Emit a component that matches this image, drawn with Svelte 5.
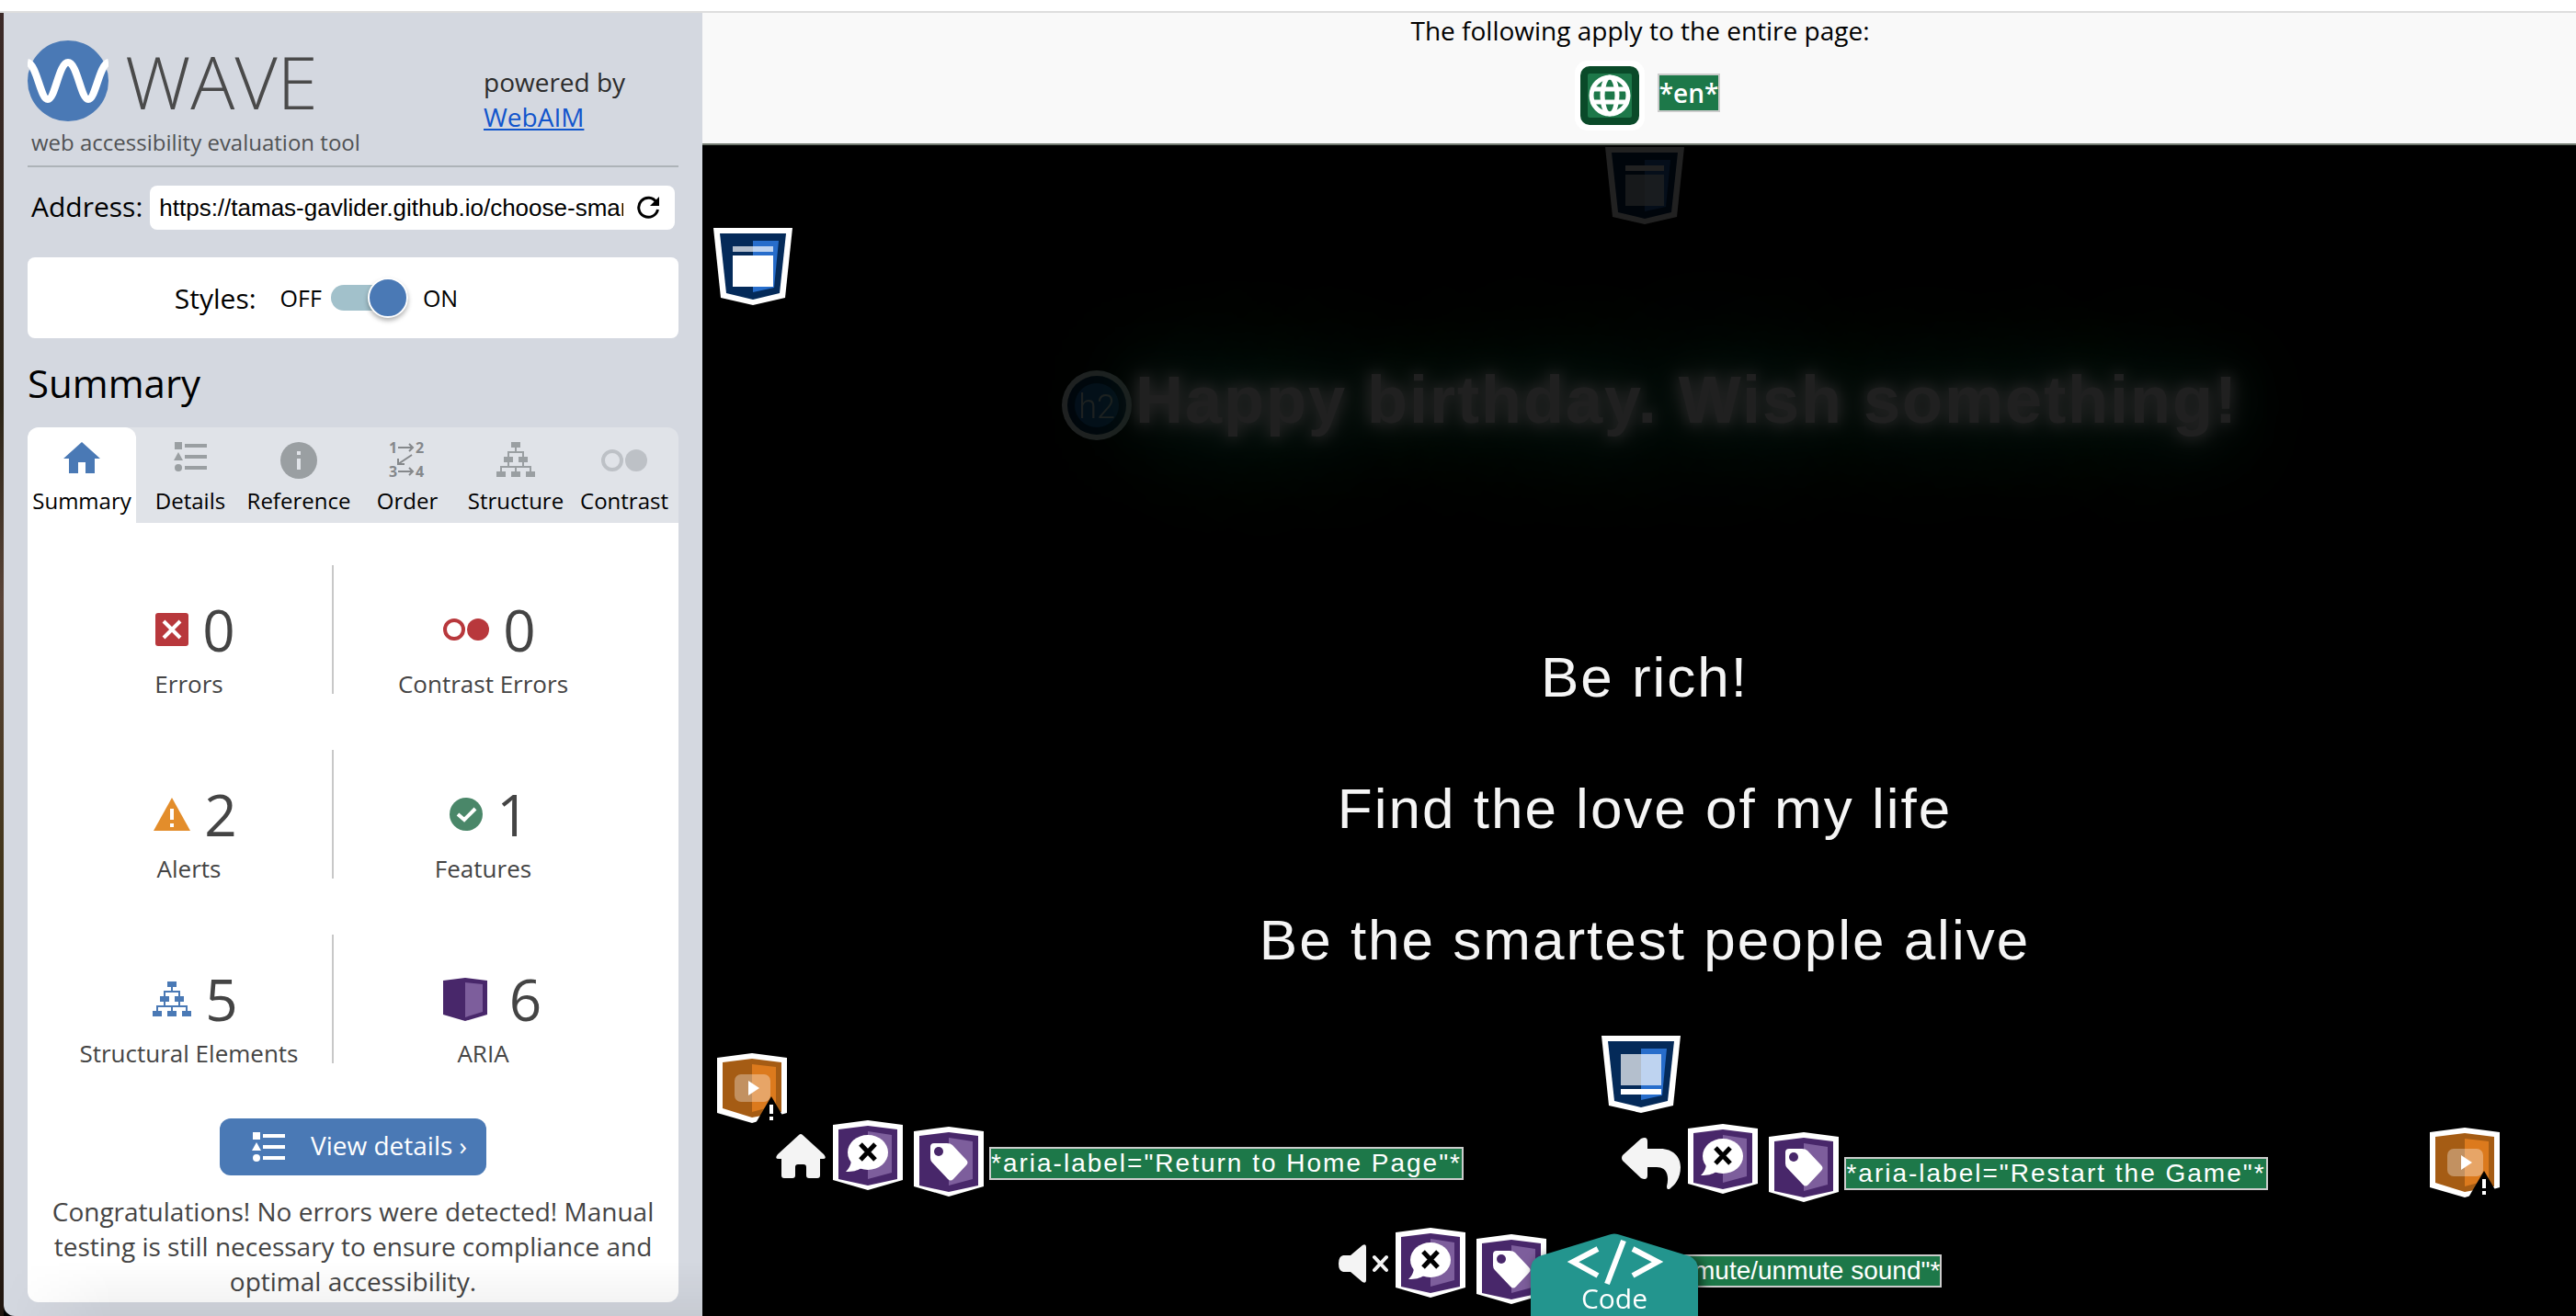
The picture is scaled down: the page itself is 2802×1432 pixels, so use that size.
<script>
  const tabs = [
    { id: 'home', label: 'Summary' },
    { id: 'details', label: 'Details' },
    { id: 'reference', label: 'Reference' },
    { id: 'order', label: 'Order' },
    { id: 'structure', label: 'Structure' },
    { id: 'contrast', label: 'Contrast' }
  ];

  const rows = [
    [
      { icon: 'error', count: 0, label: 'Errors' },
      { icon: 'contrastError', count: 0, label: 'Contrast Errors' }
    ],
    [
      { icon: 'alert', count: 2, label: 'Alerts' },
      { icon: 'feature', count: 1, label: 'Features' }
    ],
    [
      { icon: 'structural', count: 5, label: 'Structural Elements' },
      { icon: 'aria', count: 6, label: 'ARIA' }
    ]
  ];

  const wishes = ['Be rich!', 'Find the love of my life', 'Be the smartest people alive'];

  let active = $state('home');
  let stylesOn = $state(true);
  let address = $state('https://tamas-gavlider.github.io/choose-smart/');
</script>

{#snippet listIcon()}
  <svg width="36" height="32" viewBox="0 0 36 32" fill="currentColor" aria-hidden="true">
    <rect x="1" y="0" width="8" height="8" />
    <path d="M5 11l5 9H0z" />
    <circle cx="5" cy="28" r="4" />
    <path d="M12 2h24v4H12zM12 14h24v4H12zM12 26h24v4H12z" />
  </svg>
{/snippet}

{#snippet treeIcon()}
  <svg width="42" height="38" viewBox="0 0 42 38" fill="currentColor" aria-hidden="true">
    <path d="M16 0h10v6H16zM8 16h10v6H8zM24 16h10v6H24zM0 32h10v6H0zM16 32h10v6H16zM32 32h10v6H32z" />
    <path d="M21 5v6M13 16v-5h16v5M13 22v5M29 22v5M5 32v-5h32v5M21 27v5" fill="none" stroke="currentColor" stroke-width="2" />
  </svg>
{/snippet}

{#snippet landmark(kind)}
  <svg class="mark" width="86" height="84" viewBox="0 0 86 84" role="img" aria-label="{kind} landmark">
    <path d="M0 0h86l-8 76-35 8-35-8z" fill="#fff" />
    <path d="M7 6h72l-7 65-29 7-29-7z" fill="#042a59" />
    <path d="M43 14h28l-5 51-23 5z" fill="#276dcb" />
    {#if kind === 'header'}
      <path d="M22 20h42v6H22z" fill="#fff" />
      <path d="M22 30h42v34H22z" fill="#fff" opacity=".7" />
    {:else if kind === 'main'}
      <path d="M21 20h44v6H21z" fill="#fff" opacity=".7" />
      <path d="M21 30h44v34H21z" fill="#fff" />
    {:else}
      <path d="M21 20h44v34H21z" fill="#fff" opacity=".7" />
      <path d="M21 58h44v6H21z" fill="#fff" />
    {/if}
  </svg>
{/snippet}

{#snippet ariaHidden()}
  <svg class="mark" width="76" height="76" viewBox="0 0 76 76" role="img" aria-label="ARIA hidden">
    <path d="M0 5l38-5 38 5v60L38 76 0 65z" fill="#fff" />
    <path d="M6 10l32-4 32 4v54l-32 7-32-7z" fill="#48276a" />
    <path d="M38 12l26 4v41l-26 7z" fill="#7d5e9c" />
    <ellipse cx="38" cy="35" rx="22" ry="19" fill="#fff" />
    <path d="M20 42c0 6-2 10-6 14 8 0 12-1 17-4z" fill="#fff" />
    <path d="M30 26l16 17M46 26L30 43" fill="none" stroke="#000" stroke-width="5" />
  </svg>
{/snippet}

{#snippet ariaLabel()}
  <svg class="mark tag" width="76" height="76" viewBox="0 0 76 76" role="img" aria-label="ARIA label">
    <path d="M0 5l38-5 38 5v60L38 76 0 65z" fill="#fff" />
    <path d="M6 10l32-4 32 4v54l-32 7-32-7z" fill="#48276a" />
    <path d="M38 12l26 4v41l-26 7z" fill="#7d5e9c" />
    <path d="M22 18h14q4 0 6 2l15 16q3 3 0 6L43 57q-3 3-6 0L20 39q-2-2-2-5V22q0-4 4-4z" fill="#fff" />
    <circle cx="27" cy="27" r="5" fill="#48276a" />
  </svg>
{/snippet}

{#snippet media()}
  <svg class="mark" width="76" height="76" viewBox="0 0 76 76" role="img" aria-label="Audio or video">
    <path d="M0 5l38-5 38 5v60L38 76 0 65z" fill="#fff" />
    <path d="M6 10l32-4 32 4v54l-32 6-32-10z" fill="#a55c14" />
    <path d="M38 12l26 3v42l-26 7z" fill="#dc7a1d" />
    <rect x="19" y="23" width="39" height="30" rx="7" fill="#fff" opacity=".33" />
    <path d="M34 30l12 8-12 8z" fill="#fff" />
    <path d="M59 47l17 29H42z" fill="#000" />
    <path d="M59 56v10M59 69v4" stroke="#fff" stroke-width="4" />
  </svg>
{/snippet}

<div class="window">
  <div class="chrome"></div>
  <div class="body">
    <div class="edge"></div>

    <aside class="sidebar">
      <header class="brand">
        <div class="brand-main">
          <div class="logo">
            <svg width="88" height="88" viewBox="0 0 88 88" aria-hidden="true">
              <circle cx="44" cy="44" r="44" fill="#4a79b5" />
              <path d="M0 24C10 26 14 64 22 64S34 24 44 24s14 40 22 40S78 26 88 24" fill="none" stroke="#fff" stroke-width="8" />
            </svg>
            <span class="wordmark">WAVE</span>
          </div>
          <p class="tagline">web accessibility evaluation tool</p>
        </div>
        <p class="powered">powered by<br /><a href="https://webaim.org/">WebAIM</a></p>
      </header>

      <form class="address" onsubmit={(e) => e.preventDefault()}>
        <label for="address">Address:</label>
        <div class="field">
          <input id="address" type="text" bind:value={address} />
          <button type="submit" aria-label="Reload">
            <svg width="26" height="26" viewBox="0 0 26 26" aria-hidden="true">
              <path d="M22 7A10.500 10.500 0 1 0 23.500 15" fill="none" stroke="#000" stroke-width="3" />
              <path d="M25 1v10H15z" fill="#000" />
            </svg>
          </button>
        </div>
      </form>

      <div class="styles">
        <span class="styles-title" id="styles-title">Styles:</span>
        <label class="toggle">
          <span>OFF</span>
          <input type="checkbox" role="switch" bind:checked={stylesOn} aria-labelledby="styles-title" />
          <span>ON</span>
        </label>
      </div>

      <h1>Summary</h1>

      <div class="tabs" role="tablist">
        {#each tabs as tab (tab.id)}
          <button class="tab" class:active={active === tab.id} role="tab" aria-selected={active === tab.id} onclick={() => (active = tab.id)}>
            <span class="tab-icon {tab.id}">
              {#if tab.id === 'home'}
                <svg width="40" height="34" viewBox="0 0 40 34" fill="currentColor" aria-hidden="true">
                  <path d="M20 0l20 18h-6v16H24V22h-8v12H6V18H0z" />
                </svg>
              {:else if tab.id === 'details'}
                {@render listIcon()}
              {:else if tab.id === 'reference'}
                <svg width="40" height="40" viewBox="0 0 40 40" aria-hidden="true">
                  <circle cx="20" cy="20" r="20" fill="currentColor" />
                  <path d="M18 10h4v4h-4zM18 18h4v12h-4z" fill="#e0e3e8" />
                </svg>
              {:else if tab.id === 'order'}
                <svg class="steps" width="40" height="40" viewBox="0 0 40 40" aria-hidden="true">
                  <g fill="#85888b" font-family="Open Sans, sans-serif" font-size="16" font-weight="700">
                    <text x="0" y="12">1</text>
                    <text x="29" y="12">2</text>
                    <text x="0" y="38">3</text>
                    <text x="29" y="38">4</text>
                  </g>
                  <path d="M10 6h16M22 2l4 4-4 4M10 32h16M22 28l4 4-4 4M25 14L10 24M10 18v6h7" fill="none" stroke="#85888b" stroke-width="2" />
                </svg>
              {:else if tab.id === 'structure'}
                {@render treeIcon()}
              {:else}
                <svg width="50" height="24" viewBox="0 0 50 24" aria-hidden="true">
                  <circle cx="12" cy="12" r="10" fill="none" stroke="currentColor" stroke-width="4" />
                  <circle cx="38" cy="12" r="12" fill="currentColor" />
                </svg>
              {/if}
            </span>
            <span>{tab.label}</span>
          </button>
        {/each}
      </div>

      <section class="panel">
        <div class="stats">
          {#each rows as row, i (i)}
            <div class="stat-row">
              {#each row as stat, j (stat.label)}
                {#if j}<div class="divider"></div>{/if}
                <div class="stat">
                  <div class="figure {stat.icon}">
                    {#if stat.icon === 'error'}
                      <svg width="36" height="36" viewBox="0 0 36 36" aria-hidden="true">
                        <rect width="36" height="36" rx="3" fill="#b8383c" />
                        <path d="M9 9l18 18M27 9L9 27" stroke="#fff" stroke-width="4" />
                      </svg>
                    {:else if stat.icon === 'contrastError'}
                      <svg width="50" height="24" viewBox="0 0 50 24" aria-hidden="true">
                        <circle cx="12" cy="12" r="10" fill="none" stroke="#b8383c" stroke-width="4" />
                        <circle cx="38" cy="12" r="12" fill="#b8383c" />
                      </svg>
                    {:else if stat.icon === 'alert'}
                      <svg width="40" height="36" viewBox="0 0 40 36" aria-hidden="true">
                        <path d="M20 0l20 36H0z" fill="#e38d2b" />
                        <path d="M18 12h4v12h-4zM18 28h4v4h-4z" fill="#fff" />
                      </svg>
                    {:else if stat.icon === 'feature'}
                      <svg width="36" height="36" viewBox="0 0 36 36" aria-hidden="true">
                        <circle cx="18" cy="18" r="18" fill="#4a8769" />
                        <path d="M9 18l7 6 12-12" fill="none" stroke="#fff" stroke-width="4" />
                      </svg>
                    {:else if stat.icon === 'structural'}
                      {@render treeIcon()}
                    {:else}
                      <svg width="48" height="47" viewBox="0 0 48 47" aria-hidden="true">
                        <path d="M0 3l24-3 24 3v37l-24 7-24-7z" fill="#48276a" />
                        <path d="M24 5l19 2v30l-19 6z" fill="#7d5e9c" />
                      </svg>
                    {/if}
                    <span>{stat.count}</span>
                  </div>
                  <div class="stat-label">{stat.label}</div>
                </div>
              {/each}
            </div>
          {/each}
        </div>

        <button class="view">{@render listIcon()}<span>View details ›</span></button>

        <p class="message">
          Congratulations! No errors were detected! Manual testing is still necessary to ensure
          compliance and optimal accessibility.
        </p>
      </section>
    </aside>

    <div class="page">
      <header class="page-bar">
        <p>The following apply to the entire page:</p>
        <div class="page-marks">
          <svg width="76" height="76" viewBox="0 0 76 76" role="img" aria-label="Language">
            <rect width="76" height="76" rx="14" fill="#fff" />
            <rect x="6" y="6" width="64" height="64" rx="10" fill="#0a4a29" />
            <rect x="14" y="14" width="48" height="48" rx="2" fill="#1d7849" />
            <g fill="none" stroke="#fff" stroke-width="5">
              <circle cx="38" cy="38" r="20" />
              <ellipse cx="38" cy="38" rx="8" ry="20" />
              <path d="M20 31h36M20 45h36" />
            </g>
          </svg>
          <span class="lang">*en*</span>
        </div>
      </header>

      <main class="stage">
        <div class="fading centered">{@render landmark('header')}</div>
        <div class="main-mark">{@render landmark('main')}</div>

        <div class="fading title">
          <svg width="76" height="76" viewBox="0 0 76 76" role="img" aria-label="Heading level 2">
            <circle cx="38" cy="38" r="38" fill="#fff" />
            <circle cx="38" cy="38" r="32" fill="#042a59" />
            <circle cx="38" cy="38" r="24" fill="#276dcb" />
            <text x="38" y="52" text-anchor="middle" font-family="Roboto, sans-serif" font-size="36" font-weight="300" fill="#fff">h2</text>
          </svg>
          <h2>Happy birthday. Wish something!</h2>
        </div>

        <ul class="wishes">
          {#each wishes as wish (wish)}
            <li>{wish}</li>
          {/each}
        </ul>

        <div class="upper">
          {@render media()}
          {@render landmark('footer')}
          <span></span>
        </div>

        <div class="controls">
          <div class="control home">
            <svg width="54" height="48" viewBox="0 0 54 48" fill="#f4f4f4" role="img" aria-label="Home">
              <path d="M25 1q2-2 4 0l23 21q4 5-1 5h-3v18q0 3-3 3H36q-3 0-3-3V36q0-3-3-3h-6q-3 0-3 3v9q0 3-3 3H9q-3 0-3-3V27H3q-5 0-1-5z" />
            </svg>
            {@render ariaHidden()}
            {@render ariaLabel()}
            <span class="label spaced">*aria-label="Return to Home Page"*</span>
          </div>
          <div class="control restart">
            <svg width="64" height="56" viewBox="0 0 64 56" fill="#f4f4f4" role="img" aria-label="Restart">
              <path d="M1 19L21 1q7-3 7 3v8h14c14 0 22 9 22 20 0 12-6 19-11 23q-4 3-4-2c3-12 0-21-11-21H28v9q0 6-7 3L1 25q-2-3 0-6z" />
            </svg>
            {@render ariaHidden()}
            {@render ariaLabel()}
            <span class="label spaced">*aria-label="Restart the Game"*</span>
          </div>
          <div class="last">{@render media()}</div>
        </div>

        <div class="control sound">
          <svg width="54" height="42" viewBox="0 0 54 42" role="img" aria-label="Muted">
            <path d="M5 12h8L26 1q4-2 4 2v36q0 4-4 2L13 30H5q-5-1-5-9t5-9z" fill="#f4f4f4" />
            <path d="M39 14l13 14M52 14L39 28" stroke="#f4f4f4" stroke-width="4" stroke-linecap="round" />
          </svg>
          {@render ariaHidden()}
          {@render ariaLabel()}
          <span class="label">*aria-label="mute/unmute sound"*</span>
        </div>
      </main>

      <button class="code">
        <svg width="182" height="90" viewBox="0 0 182 90" preserveAspectRatio="none" aria-hidden="true">
          <path d="M0 90V40q0-11 9-15L84 2q7-3 14 0l75 23q9 4 9 15v50z" fill="#23958e" />
          <path d="M73 17L46 31l27 15M111 17l27 14-27 15M101 8L83 55" fill="none" stroke="#fff" stroke-width="6" />
        </svg>
        <span>Code</span>
      </button>
    </div>
  </div>
</div>

<style>
  :global(body) {
    margin: 0;
    background: #000;
  }

  .window {
    display: flex;
    flex-direction: column;
    min-height: 100vh;
    font-family: 'Open Sans', sans-serif;
    color: #000;
  }

  p, h1, h2, ul {
    margin: 0;
    padding: 0;
    font-weight: 400;
  }

  svg {
    display: block;
    flex: none;
  }

  button {
    margin: 0;
    padding: 0;
    border: 0;
    background: none;
    color: inherit;
    font-family: inherit;
    cursor: pointer;
  }

  .chrome {
    height: 12px;
    background: #fff;
    border-bottom: 2px solid #dedede;
  }

  .body {
    flex: 1;
    display: grid;
    grid-template-columns: 4px 760px 1fr;
  }

  .edge {
    background: linear-gradient(#3c2a28, #2b2417 30%, #5a4438 45%, #44371c 65%, #3a2a1c 80%, #21160f);
  }

  /* Sidebar */
  .sidebar {
    box-sizing: border-box;
    position: relative;
    padding: 0 26px 15px;
    background: #d4d8e0;
    border-bottom-left-radius: 12px;
  }

  .sidebar::after {
    content: '';
    position: absolute;
    inset: auto 0 0 0;
    height: 60px;
    background: linear-gradient(rgba(0, 0, 0, 0), rgba(0, 0, 0, 0.06));
    mask-image: linear-gradient(to right, transparent, #000 120px);
    pointer-events: none;
  }

  .brand {
    display: flex;
    justify-content: space-between;
    border-bottom: 2px solid #adb3b8;
    padding-bottom: 9px;
  }

  .brand-main {
    padding-top: 30px;
  }

  .logo {
    display: flex;
    align-items: center;
    gap: 18px;
    height: 88px;
  }

  .wordmark {
    font-size: 80px;
    line-height: 88px;
    font-weight: 300;
    color: #4a4a4a;
  }

  .tagline {
    padding: 7px 0 0 4px;
    font-size: 24px;
    line-height: 32px;
    color: #505254;
  }

  .powered {
    width: 212px;
    padding-top: 56px;
    font-size: 28px;
    line-height: 38px;
    color: #2c2c2c;
  }

  .powered a {
    color: #1155cc;
  }

  .address {
    display: flex;
    align-items: center;
    gap: 8px;
    margin-top: 20px;
    padding: 0 4px;
    font-size: 30px;
    line-height: 48px;
  }

  .address label {
    height: 50px;
  }

  .field {
    flex: 1;
    display: flex;
    align-items: center;
    gap: 14px;
    height: 48px;
    padding: 0 16px 0 10px;
    border-radius: 8px;
    background: #fff;
  }

  .address {
    height: 48px;
  }

  .field input {
    flex: 1;
    min-width: 0;
    padding: 0;
    border: 0;
    outline: 0;
    background: none;
    font-family: 'Liberation Sans', sans-serif;
    font-size: 26px;
    color: #000;
  }

  .styles {
    display: flex;
    align-items: center;
    justify-content: center;
    gap: 26px;
    height: 88px;
    margin-top: 30px;
    padding-right: 80px;
    border-radius: 8px;
    background: #fff;
  }

  .styles-title {
    font-size: 30px;
  }

  .toggle {
    display: flex;
    align-items: center;
    gap: 10px;
    font-size: 25px;
  }

  .toggle input {
    appearance: none;
    display: flex;
    align-items: center;
    justify-content: flex-start;
    width: 84px;
    height: 28px;
    margin: 0 6px 0 0;
    border-radius: 14px;
    background: #a2c1cb;
  }

  .toggle input:checked {
    justify-content: flex-end;
  }

  .toggle input::before {
    content: '';
    width: 40px;
    height: 40px;
    border: 2px solid #fff;
    border-radius: 50%;
    background: #4a79b5;
    box-shadow: 0 3px 5px rgba(0, 0, 0, 0.3);
  }

  h1 {
    margin: 21px 0 20px;
    font-size: 42px;
    line-height: 56px;
  }

  .tabs {
    display: grid;
    grid-template-columns: repeat(6, 1fr);
    border-radius: 12px 12px 0 0;
    background: #e0e3e8;
  }

  .tab {
    display: flex;
    flex-direction: column;
    align-items: center;
    gap: 8px;
    height: 104px;
    padding-top: 16px;
    border-radius: 12px 12px 0 0;
    font-size: 24px;
    line-height: 32px;
    white-space: nowrap;
  }

  .tab.active {
    background: #fff;
  }

  .tab-icon {
    display: flex;
    justify-content: center;
    height: 40px;
    color: #9a9fa2;
  }

  .tab-icon.home {
    color: #4a79b5;
  }

  .tab-icon.contrast {
    align-items: center;
    color: #bdc1c6;
  }

  .steps {
    overflow: visible;
  }

  .panel {
    padding: 46px 20px 4px;
    border-radius: 0 0 12px 12px;
    background: #fff;
    color: #444;
  }

  .stats {
    display: flex;
    flex-direction: column;
    gap: 53px;
    padding-right: 30px;
  }

  .stat-row {
    display: grid;
    grid-template-columns: 311fr 2px 325fr;
    height: 148px;
  }

  .divider {
    height: 140px;
    background: #c8c8c8;
  }

  .stat {
    padding-top: 39px;
    text-align: center;
  }

  .figure {
    display: flex;
    align-items: center;
    justify-content: center;
    gap: 15px;
    padding-left: 14px;
    font-size: 62px;
    line-height: 62px;
  }

  .figure.structural svg {
    color: #4a79b5;
  }

  .figure.aria {
    gap: 24px;
    padding-left: 20px;
  }

  .stat-label {
    padding-top: 10px;
    font-size: 26px;
    line-height: 36px;
  }

  .view {
    display: flex;
    align-items: center;
    gap: 28px;
    height: 62px;
    margin: 52px auto 20px;
    padding: 0 21px 0 35px;
    border-radius: 12px;
    background: #4a79b5;
    color: #fff;
    font-size: 28px;
    line-height: 56px;
  }

  .view span {
    height: 60px;
  }

  .message {
    font-size: 28px;
    line-height: 38px;
    text-align: center;
  }

  /* Evaluated page */
  .page {
    position: relative;
    display: flex;
    flex-direction: column;
    min-width: 0;
    overflow: hidden;
    background: #000;
  }

  .page-bar {
    display: flex;
    flex-direction: column;
    align-items: center;
    gap: 14px;
    height: 142px;
    padding-left: 2px;
    border-bottom: 2px solid #6f776e;
    background: #f9f9f9;
    font-size: 28px;
    line-height: 38px;
  }

  .page-marks {
    display: flex;
    gap: 14px;
    padding-left: 16px;
  }

  .lang {
    align-self: flex-start;
    margin-top: 14px;
    border: 2px solid #ccc;
    background: #1d7849;
    color: #fff;
    font-weight: 600;
  }

  .stage {
    flex: 1;
    padding: 2px 0 0 12px;
    font-family: 'Liberation Sans', sans-serif;
    color: #f5f5f5;
  }

  .centered {
    display: flex;
    justify-content: center;
  }

  .fading {
    opacity: 0.13;
  }

  .main-mark {
    margin-top: 4px;
  }

  .title {
    display: flex;
    justify-content: center;
    align-items: flex-start;
    gap: 4px;
    margin-top: 71px;
    padding-left: 12px;
  }

  h2 {
    font-size: 72px;
    line-height: 64px;
    font-weight: 700;
    letter-spacing: 2px;
    text-shadow:
      0 0 14px #fff,
      0 0 20px #fff,
      0 0 42px #fff,
      0 0 84px #0fa,
      0 0 164px #0fa,
      0 0 184px #0fa,
      0 0 204px #0fa,
      0 0 302px #0fa;
  }

  .wishes {
    margin-top: 186px;
    list-style: none;
    text-align: center;
    font-size: 62px;
    line-height: 143px;
    letter-spacing: 2px;
  }

  .upper {
    display: grid;
    grid-template-columns: 1fr auto 1fr;
    height: 92px;
    margin-top: 33px;
    padding: 0 12px 0 4px;
  }

  .upper > .mark:first-child {
    margin-top: 19px;
  }

  .controls {
    display: flex;
    justify-content: space-between;
    align-items: flex-start;
    padding: 0 83px 0 68px;
  }

  .control {
    display: flex;
    align-items: flex-start;
  }

  .control > svg {
    margin-top: 15px;
  }

  .control > .mark {
    margin: 0 0 0 8px;
  }

  .control > .tag {
    margin: 7px 0 0 12px;
  }

  .restart {
    padding: 4px 4px 0 0;
  }

  .restart > .tag {
    margin-top: 9px;
  }

  .label {
    margin: 29px 0 0 6px;
    border: 2px solid #ccc;
    background: #1d7849;
    color: #fff;
    font-size: 28px;
    line-height: 32px;
    white-space: nowrap;
  }

  .restart > .label {
    margin-top: 36px;
  }

  .spaced {
    letter-spacing: 2px;
  }

  .last {
    padding-top: 8px;
  }

  .sound {
    justify-content: center;
    height: 86px;
    margin-top: 28px;
    padding-right: 10px;
  }

  .sound > svg:first-child {
    margin-top: 18px;
  }

  /* Floating drawer handle at the bottom of the page */
  .code {
    position: absolute;
    bottom: 0;
    left: calc(50% - 118px);
    width: 182px;
    height: 90px;
    color: #fff;
    font-size: 30px;
    line-height: 36px;
    filter: drop-shadow(4px 2px 6px rgba(0, 0, 0, 0.6));
  }

  .code svg {
    position: absolute;
    inset: 0;
  }

  .code span {
    position: relative;
    display: block;
    padding-top: 52px;
  }
</style>
